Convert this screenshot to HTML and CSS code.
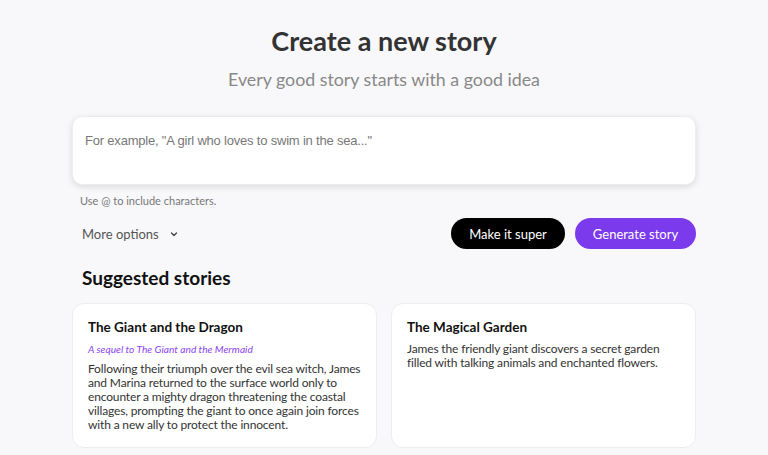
FILE: index.html
```html
<!DOCTYPE html>
<html>
<head>
<meta charset="utf-8">
<link rel="stylesheet" href="styles.css">
</head>
<body>
<main class="page">
  <h1 class="title">Create a new story</h1>
  <p class="subtitle">Every good story starts with a good idea</p>
  <div class="prompt">
    <div class="placeholder">For example, "A girl who loves to swim in the sea..."</div>
  </div>
  <p class="hint">Use @ to include characters.</p>
  <div class="actions">
    <button class="more">More options
      <svg width="10" height="10" viewBox="0 0 10 10"><path d="M2.5 4 L5 6.5 L7.5 4" fill="none" stroke="#444" stroke-width="1.3" stroke-linecap="round" stroke-linejoin="round"/></svg>
    </button>
    <div class="buttons">
      <button class="btn btn-dark">Make it super</button>
      <button class="btn btn-purple">Generate story</button>
    </div>
  </div>
  <h2 class="section">Suggested stories</h2>
  <div class="cards">
    <div class="card">
      <h3 class="card-title">The Giant and the Dragon</h3>
      <p class="card-sub">A sequel to The Giant and the Mermaid</p>
      <p class="card-body">Following their triumph over the evil sea witch, James and Marina returned to the surface world only to encounter a mighty dragon threatening the coastal villages, prompting the giant to once again join forces with a new ally to protect the innocent.</p>
    </div>
    <div class="card">
      <h3 class="card-title">The Magical Garden</h3>
      <p class="card-body">James the friendly giant discovers a secret garden filled with talking animals and enchanted flowers.</p>
    </div>
  </div>
</main>
</body>
</html>
```

FILE: styles.css
```css
* { box-sizing: border-box; }
html, body { margin: 0; padding: 0; }
body {
  background: #f8f8fa;
  font-family: "Lato", "Noto Sans", sans-serif;
  color: #222;
  overflow: hidden;
}
.page {
  width: 624px;
  margin: 0 auto;
  padding-top: 23px;
}
.title {
  margin: 0;
  text-align: center;
  font-size: 27px;
  font-weight: 700;
  color: #333;
  line-height: 36px;
}
.subtitle {
  margin: 8px 0 0;
  text-align: center;
  font-size: 17.8px;
  color: #888;
  line-height: 24px;
}
.prompt {
  margin-top: 25px;
  height: 69px;
  background: #fff;
  border-radius: 10px;
  border: 1px solid #ececec;
  box-shadow: 0 2px 6px rgba(0,0,0,0.12);
  padding: 15px 12px;
}
.placeholder {
  font-family: "Liberation Sans", Arial, sans-serif;
  font-size: 13px;
  letter-spacing: -0.2px;
  color: #777;
  line-height: 18px;
}
.hint {
  margin: 9px 0 0 8px;
  font-size: 11px;
  color: #777;
  line-height: 14px;
}
.actions {
  margin-top: 10px;
  display: flex;
  justify-content: space-between;
  align-items: center;
  padding-left: 10px;
}
.more {
  background: none;
  border: 0;
  padding: 0;
  font-family: inherit;
  font-size: 13px;
  color: #555;
  display: flex;
  align-items: center;
  gap: 10px;
}
.buttons { display: flex; gap: 10px; }
.btn {
  height: 31px;
  border: 0;
  border-radius: 16px;
  font-family: inherit;
  font-size: 13px;
  color: #fff;
  padding: 0;
  white-space: nowrap;
}
.btn-dark { background: #000; width: 114px; }
.btn-purple { background: #7c3aed; width: 121px; }
.section {
  margin: 17px 0 0 10px;
  font-size: 19px;
  font-weight: 700;
  color: #111;
  line-height: 24px;
}
.cards {
  margin-top: 13px;
  display: grid;
  grid-template-columns: 1fr 1fr;
  gap: 14px;
}
.card {
  background: #fff;
  border: 1px solid #ededf0;
  border-radius: 12px;
  height: 145px;
  padding: 14px 15px;
}
.card-title {
  margin: 0;
  font-size: 13.5px;
  font-weight: 700;
  color: #111;
  line-height: 18px;
}
.card-sub {
  margin: 6px 0 0;
  font-size: 10.2px;
  font-style: italic;
  color: #8b45f5;
  line-height: 14px;
}
.card-body {
  margin: 6px 0 0;
  font-size: 12px;
  letter-spacing: -0.15px;
  color: #333;
  line-height: 14px;
}
```
